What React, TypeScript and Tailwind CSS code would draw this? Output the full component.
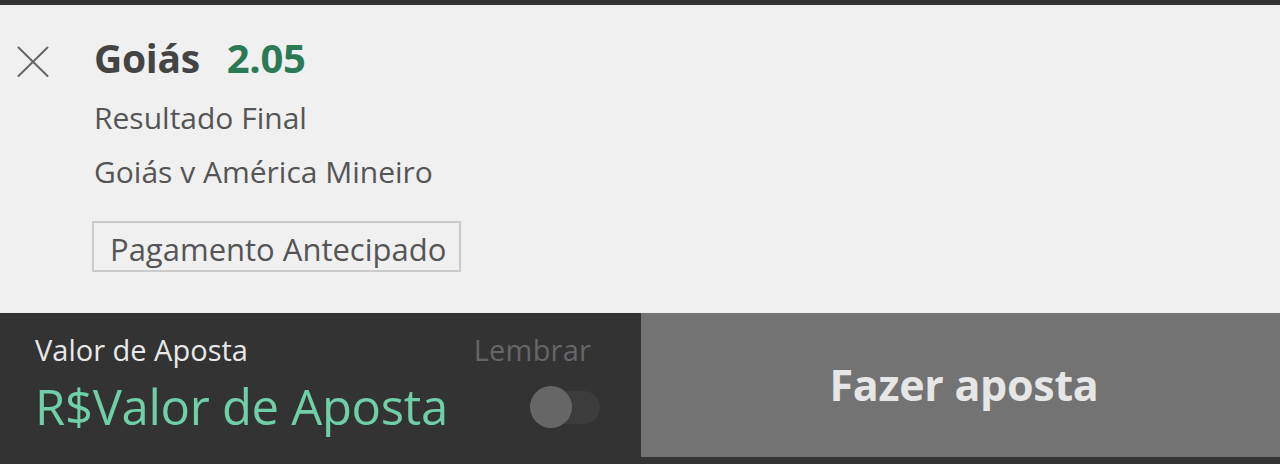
export default function App() {
  return (
    <div className="w-[1280px] h-[464px] bg-[#333333] pt-[5px] pb-[7px] flex flex-col overflow-hidden" style={{ fontFamily: '"Open Sans", "Noto Sans", sans-serif' }}>
      <div className="h-[308px] bg-[#f0f0f0] flex">
        <div className="w-[94px] pt-[41px] pl-[17px]">
          <svg width="32" height="32" viewBox="0 0 32 32" fill="none" stroke="#666" strokeWidth="2" strokeLinecap="round">
            <line x1="1.5" y1="1.5" x2="30.5" y2="30" />
            <line x1="30.5" y1="1.5" x2="1.5" y2="30" />
          </svg>
        </div>
        <div className="flex flex-col pt-[29px]">
          <div className="flex items-baseline gap-[27px] font-bold text-[39px] leading-[48px] tracking-[-0.3px]">
            <span className="text-[#444]">Goiás</span>
            <span className="text-[#2b7a56] text-[40px]">2.05</span>
          </div>
          <p className="mt-[18px] text-[30px] leading-[36px] text-[#555]">Resultado Final</p>
          <p className="mt-[18px] text-[30px] leading-[36px] text-[#555]">Goiás v América Mineiro</p>
          <div className="mt-[31px] ml-[-2px] w-[369px] h-[51px] border-2 border-[#cacaca] flex items-center pt-[4px] pl-[16px] text-[31px] leading-[36px] text-[#555]">
            Pagamento Antecipado
          </div>
        </div>
      </div>
      <div className="flex-1 flex">
        <div className="w-[641px] bg-[#333333] flex pl-[35px] pr-[50px] pt-[19px]">
          <div className="flex-1 flex flex-col">
            <span className="text-[29px] leading-[36px] text-[#e8e8e8]">Valor de Aposta</span>
            <span className="mt-[10px] text-[49px] leading-[56px] text-[#6fd0a8] tracking-[-0.3px]">R$Valor de Aposta</span>
          </div>
          <div className="flex flex-col items-end">
            <span className="text-[29px] leading-[36px] text-[#666] tracking-[0.2px]">Lembrar</span>
            <div className="mt-[18px] mr-[-9px] w-[70px] h-[42px] flex items-center relative">
              <div className="w-[70px] h-[33px] rounded-full bg-[#3c3c3c]" />
              <div className="absolute left-0 top-0 w-[42px] h-[42px] rounded-full bg-[#666]" />
            </div>
          </div>
        </div>
        <div className="flex-1 bg-[#737373] flex items-center justify-center pl-[7px]">
          <span className="text-[43px] leading-[50px] font-bold text-[#e6e6e6] tracking-[-0.3px]">Fazer aposta</span>
        </div>
      </div>
    </div>
  );
}
